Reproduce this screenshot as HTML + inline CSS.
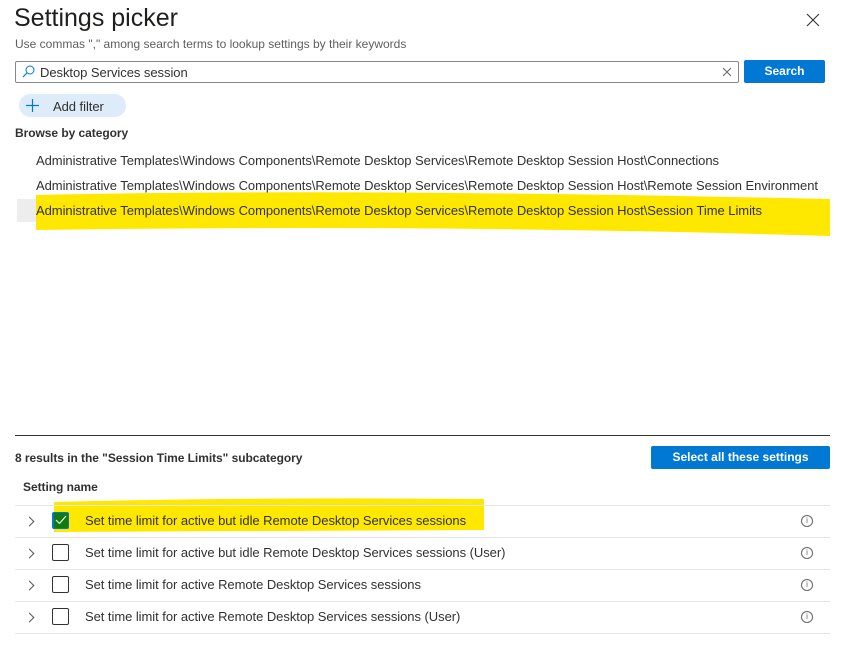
<!DOCTYPE html>
<html><head><meta charset="utf-8"><style>
body{margin:0;width:844px;height:671px;background:#fff;font-family:"Liberation Sans",sans-serif;color:#323130;position:relative;overflow:hidden}
.a{position:absolute;white-space:nowrap}
.t{font-size:13px;letter-spacing:-0.05px}
.sep{position:absolute;left:15px;width:815px;height:1px;background:#e6e6e6}
.chev{position:absolute;left:26px;width:6px;height:6px;border-right:1px solid #555;border-top:1px solid #555;transform:rotate(45deg)}
.cb{position:absolute;left:52px;width:17px;height:17px;border:1px solid #333;border-radius:2px;box-sizing:border-box}
.info{position:absolute;left:801px;width:12px;height:12px;border:1px solid #666;border-radius:50%;box-sizing:border-box;font-size:8px;text-align:center;line-height:10px;color:#666}
</style></head><body>
<div class="a" style="left:14px;top:4px;font-size:25px;color:#201f1e">Settings picker</div>
<div class="a" style="left:15px;top:37px;font-size:12px;color:#605e5c">Use commas "," among search terms to lookup settings by their keywords</div>
<svg class="a" style="left:805px;top:12px" width="16" height="16"><path d="M2 2L14 14M14 2L2 14" stroke="#333" stroke-width="1.1"/></svg>
<div class="a" style="left:15px;top:61px;width:724px;height:22px;border:1px solid #8a8886;border-radius:2px;box-sizing:border-box"></div>
<svg class="a" style="left:22px;top:65px" width="13" height="13"><circle cx="8" cy="5" r="4" fill="none" stroke="#0078d4" stroke-width="1"/><path d="M5 8L1 12" stroke="#0078d4" stroke-width="1.2"/></svg>
<div class="a t" style="left:40px;top:65px">Desktop Services session</div>
<svg class="a" style="left:722px;top:67px" width="10" height="10"><path d="M1 1L9 9M9 1L1 9" stroke="#666" stroke-width="1"/></svg>
<div class="a" style="left:744px;top:60px;width:81px;height:23px;background:#0078d4;border-radius:2px;color:#fff;font-size:12px;font-weight:bold;text-align:center;line-height:23px">Search</div>
<div class="a" style="left:19px;top:94px;width:107px;height:23px;background:#deecf9;border-radius:12px"></div>
<svg class="a" style="left:25px;top:98px" width="15" height="15"><path d="M7.5 1V14M1 7.5H14" stroke="#0078d4" stroke-width="1.2"/></svg>
<div class="a t" style="left:53px;top:99px">Add filter</div>
<div class="a t" style="left:15px;top:126px;font-weight:bold;font-size:12px">Browse by category</div>
<div class="a" style="left:17px;top:199px;width:813px;height:23px;background:#ededed"></div>
<svg class="a" style="left:36px;top:190px" width="796" height="48"><path d="M0 5Q300 -2 794 9L794 46Q400 34 0 40Z" fill="#ffe800"/></svg>
<div class="a t" style="left:36px;top:153px">Administrative Templates\Windows Components\Remote Desktop Services\Remote Desktop Session Host\Connections</div>
<div class="a t" style="left:36px;top:178px">Administrative Templates\Windows Components\Remote Desktop Services\Remote Desktop Session Host\Remote Session Environment</div>
<div class="a t" style="left:36px;top:203px">Administrative Templates\Windows Components\Remote Desktop Services\Remote Desktop Session Host\Session Time Limits</div>
<div class="a" style="left:15px;top:435px;width:815px;height:1px;background:#333"></div>
<div class="a t" style="left:15px;top:451px;font-weight:bold;font-size:12px">8 results in the "Session Time Limits" subcategory</div>
<div class="a" style="left:651px;top:446px;width:179px;height:23px;background:#0078d4;border-radius:2px;color:#fff;font-size:12px;font-weight:bold;text-align:center;line-height:23px">Select all these settings</div>
<div class="a t" style="left:23px;top:480px;font-weight:bold;font-size:12px">Setting name</div>
<svg class="a" style="left:52px;top:495px" width="434" height="38"><path d="M2 7Q200 2 432 4L432 35Q200 36 2 37Z" fill="#ffe800"/></svg>
<div class="sep" style="top:505px"></div>
<div class="sep" style="top:537px"></div>
<div class="sep" style="top:569px"></div>
<div class="sep" style="top:601px"></div>
<div class="sep" style="top:633px"></div>
<div class="chev" style="top:518px"></div>
<div class="chev" style="top:550px"></div>
<div class="chev" style="top:582px"></div>
<div class="chev" style="top:614px"></div>
<div class="cb" style="top:512px;background:#107c10;border-color:#0078d4;border-left-width:2px"></div>
<svg class="a" style="left:55px;top:515px" width="12" height="10"><path d="M1 5L4.5 8.5L11 1" fill="none" stroke="#fff" stroke-width="1.1"/></svg>
<div class="cb" style="top:544px"></div>
<div class="cb" style="top:576px"></div>
<div class="cb" style="top:608px"></div>
<div class="a t" style="left:85px;top:513px">Set time limit for active but idle Remote Desktop Services sessions</div>
<div class="a t" style="left:85px;top:545px">Set time limit for active but idle Remote Desktop Services sessions (User)</div>
<div class="a t" style="left:85px;top:577px">Set time limit for active Remote Desktop Services sessions</div>
<div class="a t" style="left:85px;top:609px">Set time limit for active Remote Desktop Services sessions (User)</div>
<div class="info" style="top:515px">i</div>
<div class="info" style="top:547px">i</div>
<div class="info" style="top:579px">i</div>
<div class="info" style="top:611px">i</div>
</body></html>
